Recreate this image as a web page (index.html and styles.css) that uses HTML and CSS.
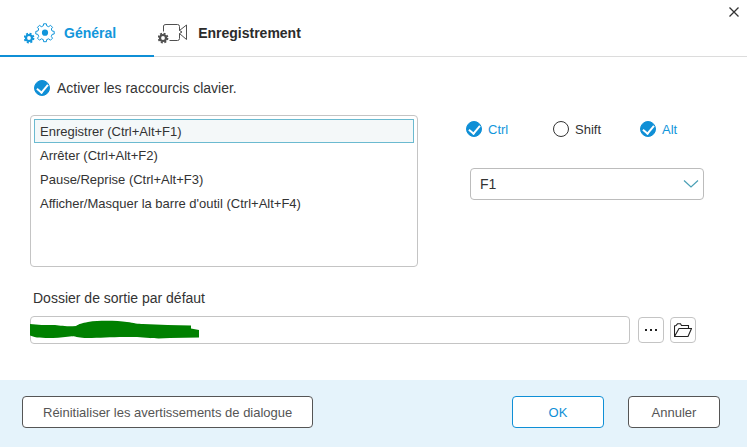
FILE: index.html
```html
<!DOCTYPE html>
<html lang="fr">
<head>
    <meta charset="UTF-8">
    <meta name="viewport" content="width=device-width, initial-scale=1.0">
    <title>Préférences</title>
    <link rel="stylesheet" href="styles.css">
</head>
<body>

    <!-- Onglets -->
    <header class="header">
        <nav class="tabs">
            <button type="button" class="tab active">
                <svg width="32" height="22" viewBox="0 0 32 22" fill="none" stroke="currentColor">
                    <circle cx="5" cy="16" r="3" stroke-width="2.2"/>
                    <circle cx="5" cy="16" r="4.5" stroke-width="1.8" stroke-dasharray="2 1.534"/>
                    <path d="M19.3 3.8 L19.6 1.8 H22.4 L22.7 3.8 L24.7 4.7 L26.5 3.3 L28.5 5.3 L27.3 7 L28.1 9 L30.2 9.4 V12 L28.1 12.4 L27.3 14.4 L28.5 16.2 L26.5 18.2 L24.7 16.8 L22.7 17.6 L22.4 19.7 H19.6 L19.3 17.6 L17.3 16.8 L15.5 18.2 L13.5 16.2 L14.7 14.4 L13.9 12.4 L11.8 12 V9.4 L13.9 9 L14.7 7 L13.5 5.3 L15.5 3.3 L17.3 4.7 Z" stroke-width="1" stroke-linejoin="round"/>
                    <circle cx="21" cy="10.7" r="3.1" fill="currentColor" stroke="none"/>
                </svg>
                Général
            </button>
            <button type="button" class="tab">
                <svg width="32" height="22" viewBox="0 0 32 22" fill="none" stroke="#505050">
                    <circle cx="5" cy="16" r="3" stroke-width="2.2"/>
                    <circle cx="5" cy="16" r="4.5" stroke-width="1.8" stroke-dasharray="2 1.534"/>
                    <path d="M5.5 9.5 V4 Q5.5 2.5 8 2.5 H19.5 Q21.5 2.5 21.5 4.5 V8.5 L28.5 3 V17.5 L21.5 11.5 V16.5 Q21.5 18.5 19.5 18.5 H11.5 M21.5 8.5 L24 10 L21.5 11.5"/>
                </svg>
                Enregistrement
            </button>
        </nav>
        <button type="button" class="close" aria-label="Fermer">
            <svg width="10" height="10" viewBox="0 0 10 10" stroke="currentColor" stroke-width="1.3">
                <path d="M0.5 0.5 L9.5 9.5 M9.5 0.5 L0.5 9.5"/>
            </svg>
        </button>
    </header>

    <main class="content">
        <label class="check check-main"><input type="checkbox" checked>Activer les raccourcis clavier.</label>

        <!-- Raccourcis -->
        <div class="shortcuts">
            <select class="shortcut-list" size="6" aria-label="Raccourcis">
                <option selected>Enregistrer (Ctrl+Alt+F1)</option>
                <option>Arrêter (Ctrl+Alt+F2)</option>
                <option>Pause/Reprise (Ctrl+Alt+F3)</option>
                <option>Afficher/Masquer la barre d'outil (Ctrl+Alt+F4)</option>
            </select>
            <div class="keys">
                <div class="modifiers">
                    <label class="check"><input type="checkbox" checked>Ctrl</label>
                    <label class="check"><input type="checkbox">Shift</label>
                    <label class="check"><input type="checkbox" checked>Alt</label>
                </div>
                <div class="key-select">
                    <select aria-label="Touche">
                        <option>F1</option>
                        <option>F2</option>
                        <option>F3</option>
                        <option>F4</option>
                    </select>
                    <svg class="chevron" width="16" height="8" viewBox="0 0 16 8" fill="none" stroke="#4a9fb5" stroke-width="1.2">
                        <path d="M1 0.5 L8 7 L15 0.5"/>
                    </svg>
                </div>
            </div>
        </div>

        <!-- Dossier de sortie -->
        <label class="folder-label" for="folder">Dossier de sortie par défaut</label>
        <div class="folder-row">
            <div class="folder-field">
                <input type="text" id="folder">
                <svg class="mask" width="170" height="20" viewBox="0 0 170 20" fill="#008000">
                    <path d="M0 4 C8 5 15 5 23 5 C30 5 34 7 46 6 C49 4 52 3 58 2 C72 0 88 1 97 2 C104 3 108 4 113 4 C130 5 145 5 161 5.5 V8.5 L169 10 V17.5 L140 18 C132 18.5 124 18.5 120 18 C110 17 104 17 95 17 C80 17 70 18 57 18 C50 18 46 16.5 42 16.3 C36 17 30 18 23 18 C12 18 6 18 0 15.5 Z"/>
                </svg>
            </div>
            <button type="button" class="icon-button" aria-label="Parcourir">
                <svg width="12" height="2" viewBox="0 0 12 2" fill="currentColor">
                    <path d="M0 0h2v2H0zM5 0h2v2H5zM10 0h2v2h-2z"/>
                </svg>
            </button>
            <button type="button" class="icon-button" aria-label="Ouvrir le dossier">
                <svg width="18" height="14" viewBox="0 0 18 14" fill="none" stroke="currentColor" stroke-width="1.1">
                    <path d="M0.5 13 V3 L2 2.5 L3.5 0.8 H6.5 L7.5 2.5 H14.5 V5.5 M0.5 13.5 L5 5.5 H17.5 L14 13.5 Z"/>
                </svg>
            </button>
        </div>
    </main>

    <footer class="footer">
        <button type="button" class="button reset">Réinitialiser les avertissements de dialogue</button>
        <button type="button" class="button primary">OK</button>
        <button type="button" class="button">Annuler</button>
    </footer>

</body>
</html>
```
FILE: styles.css
```css
* {
    box-sizing: border-box;
}

body {
    margin: 0;
    min-height: 100vh;
    display: flex;
    flex-direction: column;
    background-color: #fff;
    color: #333;
    font-family: "Liberation Sans", Arial, sans-serif;
    font-size: 14px;
}

button, input, select {
    font: inherit;
    color: inherit;
}

button {
    cursor: pointer;
}

svg {
    display: block;
    flex: none;
}

/* Onglets */
.header {
    display: flex;
    justify-content: space-between;
    align-items: flex-start;
    box-shadow: inset 0 -1px #dcdcdc;
}

.tabs {
    display: flex;
}

.tab {
    display: flex;
    align-items: center;
    gap: 8px;
    height: 57px;
    padding: 10px 38px 0 24px;
    border: none;
    border-bottom: 2px solid transparent;
    background: none;
    font-weight: bold;
    color: #2b2b2b;
}

.tab + .tab {
    padding-left: 4px;
}

.tab.active {
    color: #1296db;
    border-bottom-color: #0f8fd6;
}

.close {
    padding: 7px 8px;
    border: none;
    background: none;
    color: #333;
}

/* Contenu */
.content {
    flex: 1;
    padding: 23px 43px 36px 30px;
}

.check {
    display: flex;
    align-items: center;
    gap: 7px;
    height: 16px;
}

.check input {
    appearance: none;
    display: grid;
    place-items: center;
    width: 16px;
    height: 16px;
    margin: 0;
    border: 1px solid #333;
    border-radius: 50%;
    background-color: #fff;
}

.check input:checked {
    border-color: #0f8fd6;
    background-color: #0f8fd6;
}

.check input:checked::after {
    content: "";
    width: 5px;
    height: 9px;
    margin-bottom: 2px;
    border: solid #fff;
    border-width: 0 2px 2px 0;
    transform: rotate(40deg);
}

.check-main {
    padding-left: 4px;
}

.shortcuts {
    display: grid;
    grid-template-columns: 388fr 238fr;
    align-items: start;
    gap: 48px;
    margin-top: 19px;
}

.shortcut-list {
    width: 100%;
    height: 152px;
    padding: 3px;
    border: 1px solid #c4c4c4;
    border-radius: 4px;
    background-color: #fff;
    font-size: 13px;
    overflow: hidden;
    outline: none;
}

.shortcut-list option {
    height: 24px;
    padding: 4px 5px;
    border: 1px solid transparent;
}

.shortcut-list option:checked {
    border-color: #6bbad0;
    background: linear-gradient(#f4f8f9, #f4f8f9);
    color: #333;
}

.keys {
    padding-top: 6px;
}

.modifiers {
    display: grid;
    grid-template-columns: 87px 87px auto;
    font-size: 13px;
}

.modifiers .check {
    gap: 6px;
}

.modifiers .check:has(:checked) {
    color: #1296db;
}

.key-select {
    position: relative;
    margin: 31px 0 0 4px;
}

.key-select select {
    appearance: none;
    display: block;
    width: 100%;
    height: 32px;
    padding: 0 32px 0 9px;
    border: 1px solid #bcbcbc;
    border-radius: 4px;
    background-color: #fff;
}

.chevron {
    position: absolute;
    right: 5px;
    top: 12px;
    pointer-events: none;
}

/* Dossier de sortie */
.folder-label {
    display: block;
    margin-top: 23px;
    padding-left: 3px;
    line-height: 16px;
}

.folder-row {
    display: flex;
    align-items: center;
    gap: 6px;
    margin-top: 10px;
    padding-right: 8px;
}

.folder-field {
    position: relative;
    flex: 1;
    margin-right: 2px;
}

.folder-field input {
    display: block;
    width: 100%;
    height: 28px;
    padding: 0 8px;
    border: 1px solid #c4c4c4;
    border-radius: 4px;
}

.mask {
    position: absolute;
    left: 0;
    top: 4px;
}

.icon-button {
    display: flex;
    align-items: center;
    justify-content: center;
    width: 26px;
    height: 26px;
    padding: 0;
    border: 1px solid #c4c4c4;
    border-radius: 4px;
    background-color: #fff;
    color: #222;
}

/* Bas de la fenêtre */
.footer {
    display: flex;
    gap: 24px;
    padding: 16px 27px 19px 22px;
    background-color: #e5f3fb;
}

.button {
    width: 92px;
    height: 32px;
    padding: 0;
    border: 1px solid #555;
    border-radius: 4px;
    background-color: #fff;
    color: #555;
    font-size: 13px;
}

.button.reset {
    width: auto;
    margin-right: auto;
    padding: 0 20px;
}

.button.primary {
    border-color: #0f8fd6;
    color: #0f8fd6;
}
```
